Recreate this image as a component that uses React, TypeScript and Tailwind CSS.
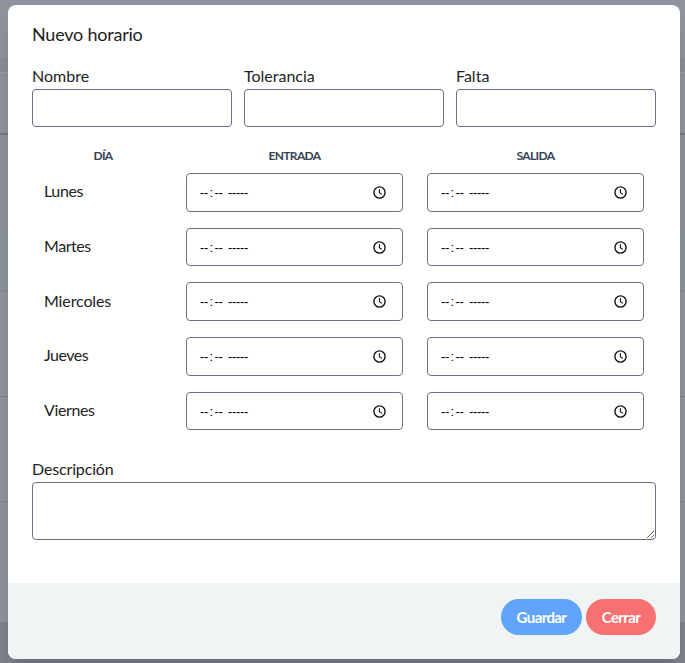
const days = [
  { name: "Lunes", tracking: "tracking-[-0.4px]" },
  { name: "Martes", tracking: "tracking-[-0.45px]" },
  { name: "Miercoles", tracking: "tracking-[-0.12px]" },
  { name: "Jueves", tracking: "tracking-[-0.5px]" },
  { name: "Viernes", tracking: "tracking-[-0.38px]" },
];

function Clock() {
  return (
    <svg width="13" height="13" viewBox="0 0 13 13" fill="none" stroke="#111" className="shrink-0">
      <circle cx="6.5" cy="6.5" r="5.6" strokeWidth="1.4" />
      <path d="M6.4 3.2V6.8L9 8.4" strokeWidth="1.1" />
    </svg>
  );
}

function TimeField() {
  return (
    <div className="flex h-[38.65px] w-[217px] items-center justify-between rounded border border-gray-500 bg-white pr-4 pl-[13px]">
      <span className="flex text-[13px] leading-none tracking-[-0.33px] text-black font-['Liberation_Sans',sans-serif]">
        <span className="w-[9.5px]">--</span>
        <span className="w-[5px]">:</span>
        <span className="w-[13.5px]">--</span>
        <span>-----</span>
      </span>
      <Clock />
    </div>
  );
}

function Field({ label }: { label: string }) {
  return (
    <label className="block w-[200px]">
      <span className="block h-[25px] text-base leading-6">{label}</span>
      <input className="block h-[38px] w-full rounded border border-gray-500 bg-white px-3" />
    </label>
  );
}

export default function App() {
  return (
    <div className="relative h-[663px] w-[685px] overflow-hidden bg-[#8f919d] text-[#222] font-['Lato',sans-serif]">
      <div className="absolute inset-0 flex flex-col">
        <div className="h-[59px] border-b border-[#898b97]" />
        <div className="h-[14px] border-b border-[#999ba6] bg-[#898b97]" />
        <div className="h-[62px] border-b-2 border-[#747783]" />
        <div className="h-[100px] bg-[#8c8e9a]" />
        <div className="h-[57px] border-b border-[#83858f] bg-[#89919b]" />
        <div className="h-[105px] border-b border-[#83858f]" />
        <div className="h-[105px] border-b border-[#83858f]" />
        <div className="h-[120px] bg-[#8c909b]" />
        <div className="flex-1 bg-[#7f818d]" />
      </div>
      <div className="relative mt-[5px] ml-2 flex h-[654px] w-[672px] flex-col overflow-hidden rounded-lg bg-white shadow-xl">
        <div className="flex h-[578px] flex-col px-6 pt-[17px]">
          <h3 className="h-6 text-lg leading-6 tracking-[-0.22px]">Nuevo horario</h3>
          <div className="mt-[18px] flex gap-3">
            <Field label="Nombre" />
            <Field label="Tolerancia" />
            <Field label="Falta" />
          </div>
          <div className="mt-[21px] grid h-4 grid-cols-[142px_241px_241px] text-center text-xs leading-4 font-bold tracking-[-0.65px] text-gray-700">
            <span>DÍA</span>
            <span>ENTRADA</span>
            <span>SALIDA</span>
          </div>
          <div className="mt-[1px]">
            {days.map((day) => (
              <div key={day.name} className="grid h-[54.7px] grid-cols-[142px_241px_241px] items-center">
                <span className={`pb-[2px] pl-3 text-base leading-6 ${day.tracking}`}>{day.name}</span>
                <span className="pl-3"><TimeField /></span>
                <span className="pl-3"><TimeField /></span>
              </div>
            ))}
          </div>
          <label className="mt-[18.25px] block">
            <span className="block h-[25px] text-base leading-6 tracking-[-0.15px]">Descripción</span>
            <textarea className="block h-[58px] w-full rounded border border-gray-500 bg-white" />
          </label>
        </div>
        <div className="flex h-[76px] items-start justify-end gap-1 bg-[#f1f4f5] px-6 pt-4 text-[15px] font-bold tracking-[-0.6px] text-white">
          <button className="h-9 w-[81px] rounded-full bg-[#60a5fa]">Guardar</button>
          <button className="h-9 w-[70px] rounded-full bg-[#f87171]">Cerrar</button>
        </div>
      </div>
    </div>
  );
}
